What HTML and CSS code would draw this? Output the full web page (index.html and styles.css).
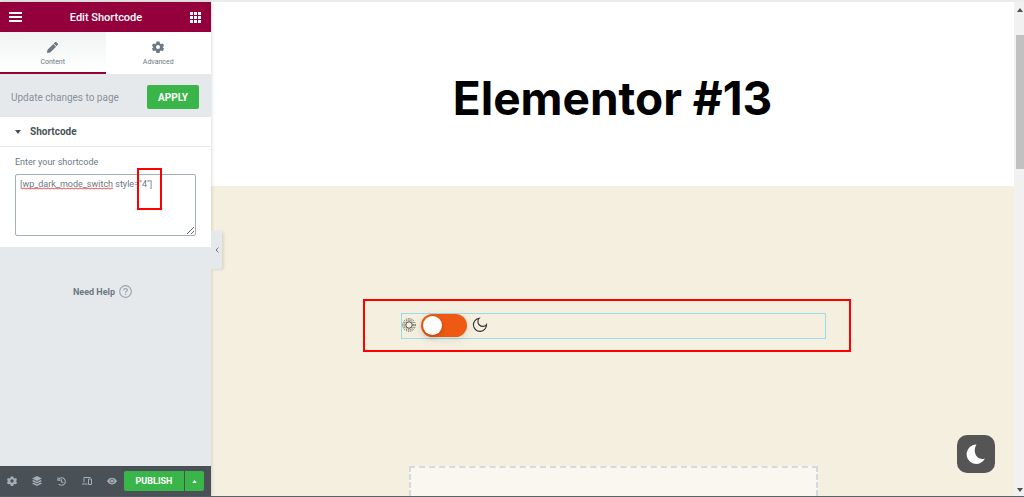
FILE: index.html
```html
<!DOCTYPE html>
<html lang="en">
<head>
    <meta charset="UTF-8">
    <meta name="viewport" content="width=device-width, initial-scale=1.0">
    <title>Elementor | Elementor #13</title>
    <link rel="stylesheet" href="styles.css">
</head>
<body>
    <div class="editor">
        <aside class="panel">
            <header class="panel-header">
                <button type="button" class="icon-btn" aria-label="Menu">
                    <svg width="13" height="10" viewBox="0 0 13 10" fill="#fff"><path d="M0 0h13v2H0zM0 4h13v2H0zM0 8h13v2H0z"/></svg>
                </button>
                <h1 class="panel-title">Edit Shortcode</h1>
                <button type="button" class="icon-btn" aria-label="Widgets">
                    <svg width="11" height="11" viewBox="0 0 11 11" fill="#fff"><path d="M0 0h3v3H0zM4 0h3v3H4zM8 0h3v3H8zM0 4h3v3H0zM4 4h3v3H4zM8 4h3v3H8zM0 8h3v3H0zM4 8h3v3H4zM8 8h3v3H8z"/></svg>
                </button>
            </header>

            <nav class="tabs">
                <button type="button" class="tab active">
                    <svg width="11" height="11" viewBox="0 0 512 512" fill="currentColor"><path d="M498 142l-47 47c-5 5-12 5-17 0L323 78c-5-5-5-12 0-17l47-47c19-19 49-19 68 0l60 60c19 19 19 49 0 68zM283 101L22 362 0 484c-3 16 11 31 28 28l122-22 261-261c5-5 5-12 0-17L300 101c-5-5-12-5-17 0z"/></svg>
                    <span>Content</span>
                </button>
                <button type="button" class="tab">
                    <svg width="12" height="12" viewBox="0 0 24 24" fill="currentColor" fill-rule="evenodd"><path d="M9 1h6l1 4 2 1 4-1 2 5-3 2 3 3-2 5-4-1-2 1-1 4H9l-1-4-2-1-4 1-2-5 3-3-3-2 2-5 4 1 2-1zM12 8a4 4 0 1 0 0 8 4 4 0 0 0 0-8z"/></svg>
                    <span>Advanced</span>
                </button>
            </nav>

            <div class="update-bar">
                <span>Update changes to page</span>
                <button type="button" class="btn-apply">APPLY</button>
            </div>

            <section class="section">
                <button type="button" class="section-toggle">
                    <svg width="6" height="4" viewBox="0 0 6 4" fill="currentColor"><path d="M0 0h6L3 4z"/></svg>
                    Shortcode
                </button>
                <div class="control">
                    <label for="shortcode">Enter your shortcode</label>
                    <div class="field">
                        <textarea id="shortcode" spellcheck="false">[wp_dark_mode_switch style="4"]</textarea>
                        <svg class="spelling" width="91" height="3" aria-hidden="true">
                            <defs><pattern id="wave" width="4" height="3" patternUnits="userSpaceOnUse"><path d="M0 2l2-1 2 1" fill="none" stroke="#f0504c"/></pattern></defs>
                            <rect width="91" height="3" fill="url(#wave)"/>
                        </svg>
                        <span class="mark mark-style"></span>
                    </div>
                </div>
            </section>

            <a class="help" href="#">
                Need Help
                <svg width="13" height="13" viewBox="0 0 13 13" fill="none" stroke="#9da5ae"><circle cx="6.5" cy="6.5" r="5.8" stroke-width="1.2"/><path d="M4.7 5.3c0-2.3 3.7-2.3 3.7-.2 0 1.2-1.9 1.3-1.9 2.6M6.5 8.8v1.3" stroke-width="1.2"/></svg>
            </a>

            <footer class="panel-footer">
                <button type="button" class="tool" aria-label="Settings">
                    <svg width="10" height="10" viewBox="0 0 24 24" fill="currentColor" fill-rule="evenodd"><path d="M9 1h6l1 4 2 1 4-1 2 5-3 2 3 3-2 5-4-1-2 1-1 4H9l-1-4-2-1-4 1-2-5 3-3-3-2 2-5 4 1 2-1zM12 8a4 4 0 1 0 0 8 4 4 0 0 0 0-8z"/></svg>
                </button>
                <button type="button" class="tool" aria-label="Navigator">
                    <svg width="10" height="10" viewBox="0 0 20 20" fill="currentColor"><path d="M10 0l10 5-10 5L0 5zM3 8l7 4 7-4 3 2-10 5L0 10zM3 13l7 4 7-4 3 2-10 5-10-5z"/></svg>
                </button>
                <button type="button" class="tool" aria-label="History">
                    <svg width="9" height="9" viewBox="0 0 20 20" fill="none" stroke="currentColor" stroke-width="2.4"><path d="M4 4a8.500 8.500 0 1 1 0 12M2 1v6h6M10 5v6l4 2"/></svg>
                </button>
                <button type="button" class="tool" aria-label="Responsive mode">
                    <svg width="10" height="8" viewBox="0 0 20 16" fill="none" stroke="currentColor" stroke-width="2"><path d="M4 11V1h13M0 14h11M13 4h6v11h-6z"/></svg>
                </button>
                <button type="button" class="tool" aria-label="Preview changes">
                    <svg width="10" height="8" viewBox="0 0 20 14"><path d="M0 7c5-9 15-9 20 0-5 9-15 9-20 0z" fill="currentColor"/><circle cx="10" cy="7" r="4" fill="none" stroke="#495157" stroke-width="1.5"/></svg>
                </button>
                <div class="publish">
                    <button type="button" class="btn-publish">PUBLISH</button>
                    <button type="button" class="btn-options" aria-label="Save options">
                        <svg width="5" height="3" viewBox="0 0 6 4" fill="#fff"><path d="M0 4h6L3 0z"/></svg>
                    </button>
                </div>
            </footer>

            <button type="button" class="collapse" aria-label="Hide panel">
                <svg width="4" height="6" viewBox="0 0 4 6" fill="none" stroke="currentColor"><path d="M3.5.5L1 3l2.5 2.5"/></svg>
            </button>
        </aside>

        <main class="preview">
            <header class="page-header">
                <h2>Elementor #13</h2>
            </header>
            <div class="page-content">
                <div class="widget">
                    <svg width="14" height="14" viewBox="0 0 28 28" fill="none" stroke="#333"><circle cx="14" cy="14" r="6.500" stroke-width="1.800"/><circle cx="14" cy="14" r="9.700" stroke-width="1.800" stroke-dasharray="2 1.810"/><circle cx="14" cy="14" r="12.600" stroke-width="1.800" stroke-dasharray="1.800 2.150"/></svg>
                    <input type="checkbox" class="switch" aria-label="Dark mode">
                    <svg width="16" height="16" viewBox="0 0 16 16" fill="none" stroke="#333" stroke-width="1.1"><path d="M7.3 1.2A6.6 6.6 0 1 0 14.6 7.6C12.8 9.8 9.4 10 7.4 8 5.3 6 5.5 3 7.3 1.2z"/></svg>
                    <span class="mark mark-widget"></span>
                </div>
                <div class="add-section"></div>
            </div>
            <button type="button" class="dark-toggle" aria-label="Toggle dark mode">
                <svg width="20" height="20" viewBox="0 0 20 20" fill="#fff"><path d="M10.5.5A9.7 9.7 0 1 0 19 14.5C12 17.5 5.5 9 10.5.5z"/></svg>
            </button>
        </main>

        <div class="scrollbar">
            <svg width="6" height="4" viewBox="0 0 6 4" fill="#505050"><path d="M0 4h6L3 0z"/></svg>
            <span class="thumb"></span>
            <svg width="6" height="4" viewBox="0 0 6 4" fill="#505050"><path d="M0 0h6L3 4z"/></svg>
        </div>
    </div>
</body>
</html>
```
FILE: styles.css
```css
* {
    box-sizing: border-box;
}
body {
    margin: 0;
    font-family: Roboto, Arial, sans-serif;
    font-size: 9px;
    color: #6d7882;
}
button {
    margin: 0;
    padding: 0;
    border: none;
    background: none;
    font: inherit;
    color: inherit;
    cursor: pointer;
}
svg {
    display: block;
    flex: none;
}
.editor {
    display: grid;
    grid-template-columns: 211px 1fr 10px;
    height: 100vh;
    border-top: 2px solid #ececec;
    border-bottom: 1px solid #59636a;
}

/* panel */
.panel {
    position: relative;
    z-index: 1;
    display: flex;
    flex-direction: column;
    min-height: 0;
    background: #e6e9ec;
    box-shadow: 0 0 4px rgba(0,0,0,0.2);
}
.panel-header {
    display: flex;
    align-items: center;
    justify-content: space-between;
    height: 30px;
    padding: 0 10px 0 9px;
    background: #93003c;
    color: #fff;
}
.panel-title {
    margin: 0;
    font-size: 11px;
    font-weight: 500;
}
.tabs {
    display: flex;
    height: 42px;
    background: #fff;
}
.tab {
    flex: 1;
    display: flex;
    flex-direction: column;
    align-items: center;
    justify-content: flex-end;
    gap: 4px;
    padding-bottom: 5px;
    font-size: 7px;
    line-height: 10px;
    border-bottom: 2px solid transparent;
}
.tab.active {
    background: linear-gradient(#f1f3f3, #fff);
    border-bottom-color: #93003c;
}
.update-bar {
    display: flex;
    align-items: center;
    justify-content: space-between;
    height: 43px;
    padding: 3px 12px 0 11px;
    color: #87919b;
    font-size: 10px;
}
.btn-apply {
    width: 52px;
    height: 24px;
    border-radius: 2px;
    background: #39b54a;
    color: #fff;
    font-weight: 700;
}
.section {
    height: 130px;
    background: #fff;
}
.section-toggle {
    display: flex;
    align-items: center;
    gap: 9px;
    width: 100%;
    height: 30px;
    padding: 0 15px;
    border-bottom: 1px solid #e6e9ec;
    color: #495157;
    font-size: 10px;
    font-weight: 700;
}
.control {
    padding: 9px 15px;
}
.control label {
    display: block;
    margin-bottom: 6px;
    line-height: 12px;
}
.field {
    position: relative;
}
.field textarea {
    display: block;
    width: 100%;
    height: 62px;
    padding: 3px 4px;
    border: 1px solid #a4afb7;
    border-radius: 2px;
    color: #6d7882;
    font: 9px/12px Roboto, Arial, sans-serif;
}
.spelling {
    position: absolute;
    left: 7px;
    top: 13px;
}
.mark {
    position: absolute;
    border: 2px solid #ff0000;
    pointer-events: none;
}
.mark-style {
    left: 122px;
    top: -6px;
    width: 25px;
    height: 42px;
}
.help {
    display: flex;
    align-items: center;
    justify-content: center;
    gap: 4px;
    margin-top: 38px;
    padding-right: 6px;
    color: #6d7882;
    font-weight: 700;
    text-decoration: none;
}
.panel-footer {
    display: flex;
    align-items: center;
    height: 30px;
    margin-top: auto;
    background: #495157;
    color: #a4afb7;
}
.tool {
    flex: 1;
    display: flex;
    justify-content: center;
}
.publish {
    display: flex;
    gap: 1px;
    margin-right: 7px;
}
.publish button {
    height: 20px;
    background: #39b54a;
    color: #fff;
    font-weight: 700;
}
.btn-publish {
    width: 60px;
    border-radius: 2px 0 0 2px;
}
.publish .btn-options {
    display: flex;
    align-items: center;
    justify-content: center;
    width: 19px;
    border-radius: 0 2px 2px 0;
}
.collapse {
    position: absolute;
    left: 100%;
    top: 229px;
    display: flex;
    align-items: center;
    justify-content: center;
    width: 11px;
    height: 38px;
    border-radius: 0 2px 2px 0;
    background: #e6e9ec;
    box-shadow: 2px 1px 3px rgba(0,0,0,0.1);
}

/* page preview */
.preview {
    position: relative;
    display: flex;
    flex-direction: column;
    min-width: 0;
    min-height: 0;
    background: #f5efe0;
}
.page-header {
    display: flex;
    align-items: center;
    justify-content: center;
    height: 184px;
    padding-top: 8px;
    background: #fff;
}
.page-header h2 {
    margin: 0;
    color: #000;
    font: 700 46px/56px Inter, Arial, sans-serif;
}
.page-content {
    flex: 1;
    display: flex;
    flex-direction: column;
    align-items: center;
    justify-content: space-between;
    padding: 127px 0 0 2px;
    min-height: 0;
}
.widget {
    position: relative;
    display: flex;
    align-items: center;
    gap: 5px;
    width: 53%;
    height: 26px;
    padding-bottom: 2px;
    border: 1px solid #9adbed;
}
.switch {
    appearance: none;
    width: 46px;
    height: 23px;
    margin: 0;
    padding: 2px;
    border-radius: 12px;
    background: #ee5a13;
    box-shadow: 0 2px 8px rgba(0,0,0,0.1);
}
.switch::before {
    content: "";
    display: block;
    width: 19px;
    height: 19px;
    border-radius: 50%;
    background: #fff;
    box-shadow: 0 2px 5px rgba(0,0,0,0.2);
}
.mark-widget {
    left: -39px;
    right: -26px;
    top: -15px;
    bottom: -14px;
}
.add-section {
    width: 51%;
    height: 30px;
    border: 2px dashed #d5dadf;
    border-bottom: none;
    background: #faf7f0;
}
.dark-toggle {
    position: absolute;
    right: 19px;
    bottom: 23px;
    display: flex;
    align-items: center;
    justify-content: center;
    width: 38px;
    height: 38px;
    border-radius: 10px;
    background: #555;
}

.scrollbar {
    display: flex;
    flex-direction: column;
    align-items: center;
    padding: 6px 0 4px 2px;
    background: #f1f1f1;
}
.scrollbar .thumb {
    width: 100%;
    height: 134px;
    margin: 23px 0 auto;
    background: #c1c1c1;
}
```
